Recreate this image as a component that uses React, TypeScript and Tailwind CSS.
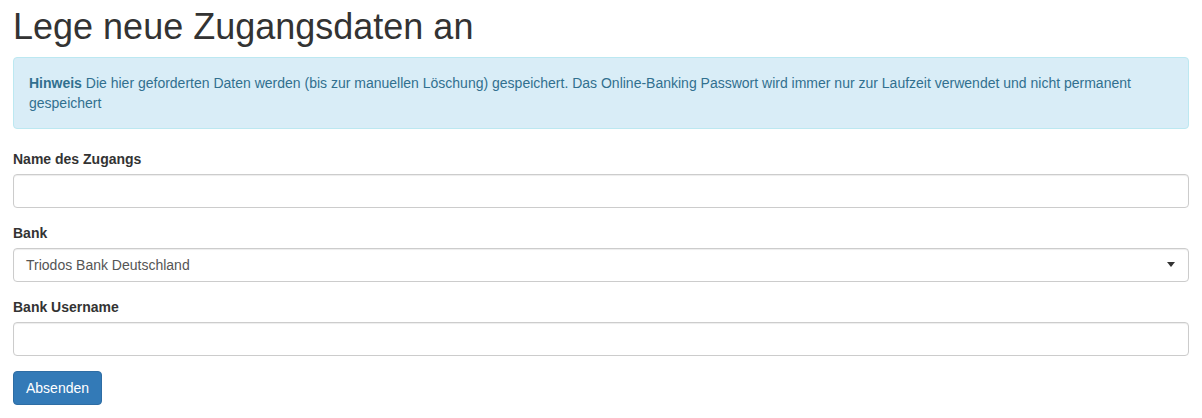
const inputClass =
    "block h-[34px] w-full rounded-[4px] border border-[#ccc] bg-white px-3 py-[6px] text-[14px] text-[#555] shadow-[inset_0_1px_1px_rgba(0,0,0,0.075)] outline-none";

const FormGroup = ({ label, children }: { label: string; children: React.ReactNode }) => (
    <div className="mb-[15px]">
        <label className="mb-[5px] block text-[14px] font-bold leading-[20px] text-[#333]">{label}</label>
        {children}
    </div>
);

export default function App() {
    return (
        <div
            className="min-h-[418px] bg-white px-[13px] text-[14px] leading-[20px] text-[#333]"
            style={{ fontFamily: '"Liberation Sans", Arial, sans-serif' }}
        >
            <h1 className="mb-[10px] pt-[7px] text-[36px] font-normal leading-[1.1] text-[#333]">
                Lege neue Zugangsdaten an
            </h1>

            <div className="mb-5 rounded-[4px] border border-[#bce8f1] bg-[#d9edf7] p-[15px] text-[#31708f]">
                <strong className="font-bold">Hinweis</strong> Die hier geforderten Daten werden (bis zur
                manuellen Löschung) gespeichert. Das Online-Banking Passwort wird immer nur zur Laufzeit
                verwendet und nicht permanent gespeichert
            </div>

            <form onSubmit={(e) => e.preventDefault()}>
                <FormGroup label="Name des Zugangs">
                    <input type="text" className={inputClass} />
                </FormGroup>

                <FormGroup label="Bank">
                    <div className={`${inputClass} flex items-center justify-between text-[#333]`}>
                        <span>Triodos Bank Deutschland</span>
                        <span className="mr-[1px] h-0 w-0 border-x-[4px] border-t-[5px] border-x-transparent border-t-[#333]" />
                    </div>
                </FormGroup>

                <FormGroup label="Bank Username">
                    <input type="text" className={inputClass} />
                </FormGroup>

                <button
                    type="submit"
                    className="rounded-[4px] border border-[#2e6da4] bg-[#337ab7] px-3 py-[6px] text-[14px] leading-[20px] text-white"
                >
                    Absenden
                </button>
            </form>
        </div>
    );
}
